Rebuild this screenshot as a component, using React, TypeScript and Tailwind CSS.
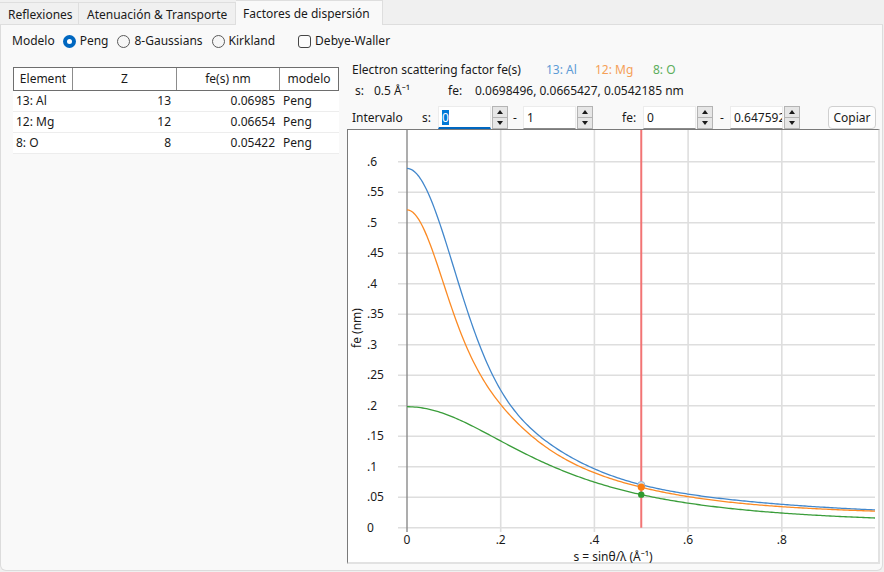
import React from "react";

// Peng-style gaussian sums, a in Å, b in Å²
const SERIES = [
  { name: "13: Al", color: "#4287cc", a: [0.3, 0.65, 1.7, 3.24], b: [0.2, 2.66, 12, 57.8] },
  { name: "12: Mg", color: "#fb8a24", a: [0.3, 0.5, 0.9, 1.6, 1.91], b: [0.2, 3, 7.5, 25, 110] },
  { name: "8: O", color: "#3a9d3a", a: [0.0974, 0.2921, 0.691, 0.699, 0.2039], b: [0.2067, 1.3815, 4.6943, 12.7105, 32.4726] },
];

const fe = (a: number[], b: number[], s: number) =>
  a.reduce((sum, ai, i) => sum + ai * Math.exp(-b[i] * s * s), 0) / 10;

const X0 = 59;
const XS = 468.5;
const Y0 = 397.7;
const YS = 610;
const XR = 527;
const sx = (s: number) => X0 + s * XS;
const sy = (v: number) => Y0 - v * YS;

function curvePath(a: number[], b: number[]) {
  const sMax = (XR - X0) / XS;
  const pts: string[] = [];
  for (let i = 0; i <= 240; i++) {
    const s = (sMax * i) / 240;
    pts.push(`${i === 0 ? "M" : "L"}${sx(s).toFixed(2)},${sy(fe(a, b, s)).toFixed(2)}`);
  }
  return pts.join(" ");
}

function Chart() {
  const yTicks = Array.from({ length: 13 }, (_, i) => i * 0.05);
  const yLabels = ["0", ".05", ".1", ".15", ".2", ".25", ".3", ".35", ".4", ".45", ".5", ".55", ".6"];
  const xTicks = [0.2, 0.4, 0.6, 0.8];
  return (
    <div className="w-[533px] h-[435px] bg-white border-t border-l border-[#7a7a7a] border-r-2 border-b-2 border-r-[#e2e2e2] border-b-[#e2e2e2]">
      <svg width="530" height="432" viewBox="0 0 530 432" className="overflow-visible">
        {yTicks.map((v) => (
          <line key={v} x1={50} x2={XR} y1={sy(v)} y2={sy(v)} stroke="#dedede" strokeWidth={1.6} />
        ))}
        {xTicks.map((s) => (
          <line key={s} x1={sx(s)} x2={sx(s)} y1={0} y2={402} stroke="#dedede" strokeWidth={1.6} />
        ))}
        <line x1={X0} x2={X0} y1={0} y2={402} stroke="#8a8a8a" strokeWidth={1.4} />
        {yLabels.map((t, i) => (
          <text key={t} x={19} y={sy(i * 0.05) + 4} fontSize={12} fill="#1a1a1a">
            {t}
          </text>
        ))}
        {["0", ".2", ".4", ".6", ".8"].map((t, i) => (
          <text key={t} x={sx(i * 0.2)} y={414} fontSize={12} fill="#1a1a1a" textAnchor="middle">
            {t}
          </text>
        ))}
        <text x={265} y={430.5} fontSize={12} fill="#1a1a1a" textAnchor="middle">
          s = sinθ/λ (Å⁻¹)
        </text>
        <text x={13} y={198} fontSize={12} fill="#1a1a1a" textAnchor="middle" transform="rotate(-90 13 198)">
          fe (nm)
        </text>
        <line x1={sx(0.5)} x2={sx(0.5)} y1={0} y2={Y0} stroke="#f27474" strokeWidth={2} />
        {SERIES.map((c) => (
          <path key={c.name} d={curvePath(c.a, c.b)} fill="none" stroke={c.color} strokeWidth={1.3} />
        ))}
        <circle cx={sx(0.5)} cy={sy(0.0698496)} r={3.6} fill="#d6e4f2" stroke="#8fb3d9" strokeWidth={1} />
        <circle cx={sx(0.5)} cy={sy(0.0665427)} r={3.6} fill="#fb7d12" />
        <circle cx={sx(0.5)} cy={sy(0.0542185)} r={3.2} fill="#2f9a2f" />
      </svg>
    </div>
  );
}

function Spin({ value, focused }: { value: string; focused?: boolean }) {
  return (
    <div className="flex h-[23px] shrink-0">
      <div
        className={`w-[53px] bg-white flex items-center pl-[3px] overflow-hidden whitespace-nowrap border border-[#ececec] ${
          focused ? "border-b-2 border-b-[#0067c0]" : "border-b-[#8a8a8a]"
        }`}
      >
        {focused ? <span className="bg-[#0078d7] text-white leading-[15px]">{value}</span> : value}
      </div>
      <div className="ml-[1px] w-[16px] flex flex-col border border-[#b4b4b4] bg-[#e6e6e6]">
        <div className="flex-1 flex items-center justify-center border-b border-[#b4b4b4]">
          <div className="w-0 h-0 border-l-[3px] border-r-[3px] border-b-[4px] border-l-transparent border-r-transparent border-b-[#1a1a1a]" />
        </div>
        <div className="flex-1 flex items-center justify-center">
          <div className="w-0 h-0 border-l-[3px] border-r-[3px] border-t-[4px] border-l-transparent border-r-transparent border-t-[#1a1a1a]" />
        </div>
      </div>
    </div>
  );
}

function Radio({ label, checked }: { label: string; checked?: boolean }) {
  return (
    <div className="flex items-center gap-[4px]">
      {checked ? (
        <div className="w-[13px] h-[13px] rounded-full bg-[#0067c0] flex items-center justify-center">
          <div className="w-[5px] h-[5px] rounded-full bg-white" />
        </div>
      ) : (
        <div className="w-[13px] h-[13px] rounded-full border border-[#5a5a5a] bg-[#f6f6f6]" />
      )}
      <span>{label}</span>
    </div>
  );
}

const ROWS = [
  ["13: Al", "13", "0.06985", "Peng"],
  ["12: Mg", "12", "0.06654", "Peng"],
  ["8: O", "8", "0.05422", "Peng"],
];

export default function App() {
  return (
    <div className="w-[884px] h-[572px] bg-[#f0f0f0] flex flex-col font-['Noto_Sans',sans-serif] text-[12px] text-[#1a1a1a] leading-none">
      {/* tabs */}
      <div className="h-[25px] flex items-end">
        <div className="w-[79px] h-[23px] border-t border-r border-b border-[#dedede] flex items-center pl-[8px] pt-[2px]">Reflexiones</div>
        <div className="w-[157px] h-[23px] border-t border-r border-b border-[#dedede] flex items-center pl-[8px] pt-[2px]">Atenuación &amp; Transporte</div>
        <div className="w-[147px] h-[25px] border-t border-r border-[#dedede] bg-[#f9f9f9] flex items-center pl-[7px] pt-[1px]">Factores de dispersión</div>
        <div className="flex-1 h-[1px] bg-[#dedede] mr-[1px]" />
      </div>

      {/* panel */}
      <div className="w-[883px] h-[546px] bg-[#f9f9f9] border-l border-r border-b border-[#dcdcdc] rounded-b-[6px] flex flex-col">
        <div className="h-[20px] mt-[6px] flex items-center pl-[11px]">
          <span className="mr-[8px]">Modelo</span>
          <Radio label="Peng" checked />
          <div className="w-[9px]" />
          <Radio label="8-Gaussians" />
          <div className="w-[9px]" />
          <Radio label="Kirkland" />
          <div className="w-[23px]" />
          <div className="flex items-center gap-[4px]">
            <div className="w-[13px] h-[13px] rounded-[3px] border border-[#454545] bg-[#fbfbfb]" />
            <span>Debye-Waller</span>
          </div>
        </div>

        <div className="flex flex-1">
          {/* left: table */}
          <div className="w-[346px] shrink-0 pl-[12px] pt-[16px]">
            <div className="w-[326px]">
              <div className="flex h-[24px] border border-[#6e6e6e] bg-white">
                <div className="w-[59px] border-r border-[#8c8c8c] flex items-center justify-center">Element</div>
                <div className="w-[104px] border-r border-[#8c8c8c] flex items-center justify-center">Z</div>
                <div className="w-[103px] border-r border-[#8c8c8c] flex items-center justify-center">fe(s) nm</div>
                <div className="flex-1 flex items-center justify-center">modelo</div>
              </div>
              {ROWS.map((r) => (
                <div key={r[0]} className="flex h-[21px] bg-white border-b border-[#ededed]">
                  <div className="w-[60px] flex items-center pl-[3px]">{r[0]}</div>
                  <div className="w-[104px] flex items-center justify-end pr-[6px]">{r[1]}</div>
                  <div className="w-[103px] flex items-center justify-end pr-[5px]">{r[2]}</div>
                  <div className="flex-1 flex items-center pl-[3px]">{r[3]}</div>
                </div>
              ))}
            </div>
          </div>

          {/* right: chart */}
          <div className="flex flex-col w-[533px]">
            <div className="h-[20px] mt-[9px] flex items-center pl-[5px] whitespace-nowrap">
              <span className="w-[194px]">Electron scattering factor fe(s)</span>
              <span className="w-[49px] text-[#5d9bd6]">13: Al</span>
              <span className="w-[58px] text-[#f5a058]">12: Mg</span>
              <span className="text-[#5cae5c]">8: O</span>
            </div>
            <div className="h-[21px] flex items-center pl-[8px] whitespace-nowrap">
              <span className="w-[19px]">s:</span>
              <span className="w-[74px]">0.5 Å⁻¹</span>
              <span className="w-[27px]">fe:</span>
              <span>0.0698496, 0.0665427, 0.0542185 nm</span>
            </div>
            <div className="h-[28px] flex items-center pl-[5px] pt-[5px] whitespace-nowrap">
              <span className="w-[70px] shrink-0">Intervalo</span>
              <span className="w-[16px] shrink-0">s:</span>
              <Spin value="0" focused />
              <span className="w-[15px] shrink-0 pl-[5px]">-</span>
              <Spin value="1" />
              <span className="w-[29px] shrink-0" />
              <span className="w-[21px] shrink-0">fe:</span>
              <Spin value="0" />
              <span className="w-[17px] shrink-0 pl-[7px]">-</span>
              <Spin value="0.647592" />
              <div className="ml-[28px] w-[48px] h-[23px] shrink-0 rounded-[4px] border border-[#d0d0d0] bg-[#fdfdfd] flex items-center justify-center">
                Copiar
              </div>
            </div>
            <Chart />
          </div>
        </div>
      </div>
    </div>
  );
}
